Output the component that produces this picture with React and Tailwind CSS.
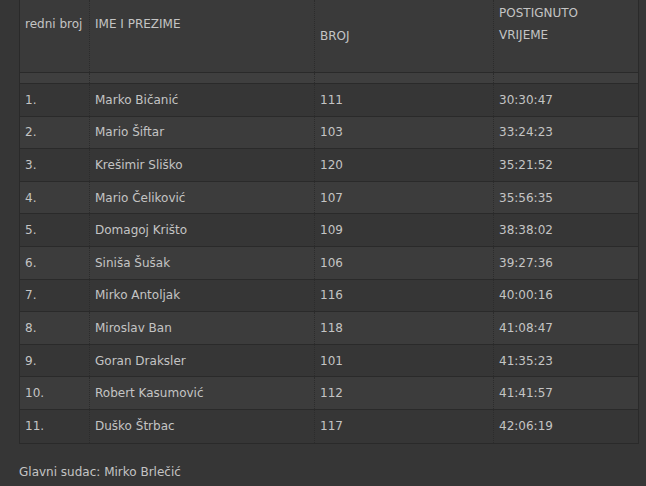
const rows = [
  ["1.", "Marko Bičanić", "111", "30:30:47"],
  ["2.", "Mario Šiftar", "103", "33:24:23"],
  ["3.", "Krešimir Sliško", "120", "35:21:52"],
  ["4.", "Mario Čeliković", "107", "35:56:35"],
  ["5.", "Domagoj Krišto", "109", "38:38:02"],
  ["6.", "Siniša Šušak", "106", "39:27:36"],
  ["7.", "Mirko Antoljak", "116", "40:00:16"],
  ["8.", "Miroslav Ban", "118", "41:08:47"],
  ["9.", "Goran Draksler", "101", "41:35:23"],
  ["10.", "Robert Kasumović", "112", "41:41:57"],
  ["11.", "Duško Štrbac", "117", "42:06:19"],
];

const cols = "grid grid-cols-[70px_225px_179px_1fr]";
const cell = "px-[5px] whitespace-nowrap border-r border-dotted border-[#2c2c2c] last:border-r-0";

export default function App() {
  return (
    <div className="min-h-screen bg-[#363636] text-[#c4c4c4] text-[12px] font-['DejaVu_Sans',sans-serif] pl-[19px] pr-[8px]">
      <div className="w-[620px] border-x border-b border-[#2a2a2a]">
        <div className={`${cols} h-[73px] bg-[#3a3a3a] border-b border-[#2a2a2a] leading-[22px]`}>
          <div className={`${cell} pt-[13px]`}>redni broj</div>
          <div className={`${cell} pt-[13px]`}>IME I PREZIME</div>
          <div className={`${cell} pt-[25px]`}>BROJ</div>
          <div className={`${cell} pt-[2px]`}>POSTIGNUTO<br />VRIJEME</div>
        </div>
        <div className={`${cols} h-[11px] bg-[#3f3f3f] border-b border-[#2a2a2a]`}>
          <div className={cell}></div>
          <div className={cell}></div>
          <div className={cell}></div>
          <div className={cell}></div>
        </div>
        {rows.map((r, i) => (
          <div
            key={r[0]}
            className={`${cols} h-[32.6px] items-stretch ${i % 2 ? "bg-[#3c3c3c]" : "bg-[#363636]"} ${i < rows.length - 1 ? "border-b border-[#2a2a2a]" : ""}`}
          >
            {r.map((c, j) => (
              <div key={j} className={`${cell} flex items-center`}>{c}</div>
            ))}
          </div>
        ))}
      </div>
      <div className="mt-[18px] leading-[20px]">Glavni sudac: Mirko Brlečić</div>
    </div>
  );
}
